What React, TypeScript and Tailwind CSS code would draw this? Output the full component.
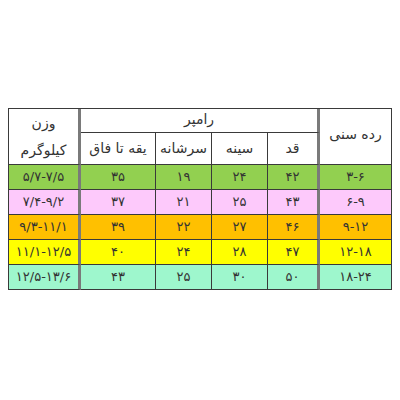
import React from "react";

const rows = [
  { bg: "bg-[#92d050]", cells: ["۵/۷-۷/۵", "۳۵", "۱۹", "۲۴", "۴۲", "۳-۶"] },
  { bg: "bg-[#fdc9fb]", cells: ["۷/۴-۹/۲", "۳۷", "۲۱", "۲۵", "۴۳", "۶-۹"] },
  { bg: "bg-[#ffc000]", cells: ["۹/۳-۱۱/۱", "۳۹", "۲۲", "۲۷", "۴۶", "۹-۱۲"] },
  { bg: "bg-[#ffff00]", cells: ["۱۱/۱-۱۲/۵", "۴۰", "۲۴", "۲۸", "۴۷", "۱۲-۱۸"] },
  { bg: "bg-[#9ef7cd]", cells: ["۱۲/۵-۱۳/۶", "۴۳", "۲۵", "۳۰", "۵۰", "۱۸-۲۴"] },
];

const rightBorders = [
  "border-r-[3px] border-r-[#7a7a7a]",
  "border-r border-r-[#3a3a3a]",
  "border-r border-r-[#3a3a3a]",
  "border-r border-r-[#3a3a3a]",
  "border-r-[3px] border-r-[#7a7a7a]",
  "border-r border-r-[#3a3a3a]",
];

export default function App() {
  return (
    <div
      className="w-[400px] h-[400px] bg-white pt-[108px] pl-[8px]"
      style={{ fontFamily: '"DejaVu Sans", "Noto Sans", sans-serif' }}
    >
      <div className="grid grid-cols-[72px_75px_56px_56px_52px_72px] grid-rows-[24px_32px_25px_25px_25px_25px_25px] w-[384px] border-l border-t border-[#3a3a3a] text-[#333]">
        <div
          dir="rtl"
          className="row-span-2 flex flex-col items-center justify-center border-b border-b-[#3a3a3a] border-r-[3px] border-r-[#7a7a7a] text-[14px] leading-[27px]"
        >
          <span>وزن</span>
          <span>کیلوگرم</span>
        </div>
        <div
          dir="rtl"
          className="col-span-4 flex items-center justify-center border-b border-b-[#3a3a3a] border-r-[3px] border-r-[#7a7a7a] text-[14px] pb-[2px]"
        >
          رامپر
        </div>
        <div
          dir="rtl"
          className="row-span-2 flex items-center justify-center border-b border-b-[#3a3a3a] border-r border-r-[#3a3a3a] text-[14px] pb-[4px]"
        >
          رده سنی
        </div>
        {["یقه تا فاق", "سرشانه", "سینه", "قد"].map((t, i) => (
          <div
            key={t}
            dir="rtl"
            className={`flex items-center justify-center border-b border-b-[#3a3a3a] text-[14px] ${rightBorders[i + 1]}`}
          >
            {t}
          </div>
        ))}
        {rows.map((r, ri) =>
          r.cells.map((c, ci) => (
            <div
              key={`${ri}-${ci}`}
              dir="ltr"
              className={`flex items-center justify-center border-b border-b-[#3a3a3a] text-[13px] ${r.bg} ${rightBorders[ci]}`}
            >
              {c}
            </div>
          ))
        )}
      </div>
    </div>
  );
}
